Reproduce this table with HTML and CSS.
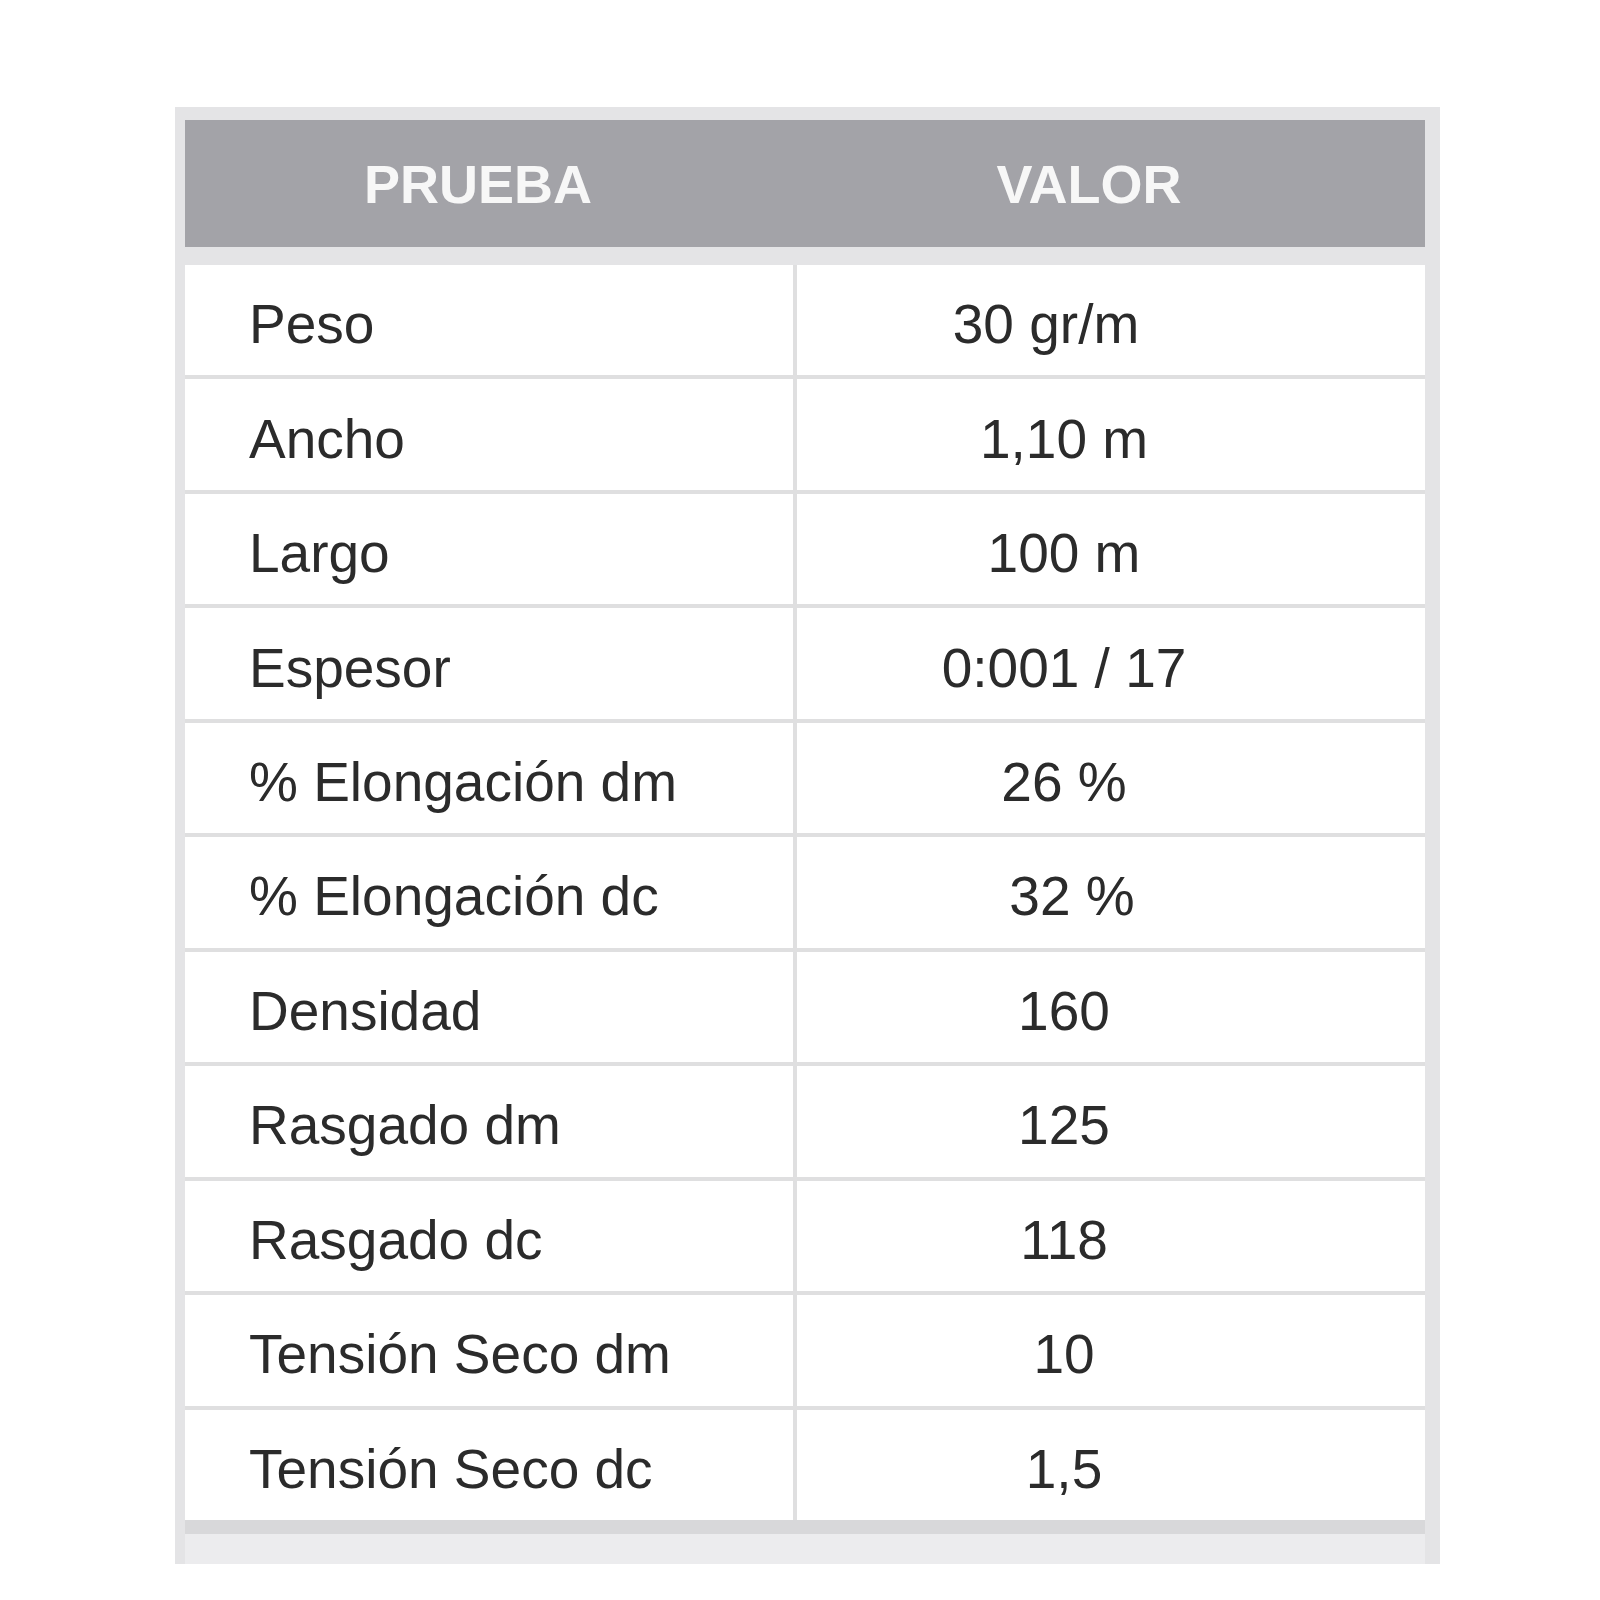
FILE: index.html
```html
<!DOCTYPE html>
<html lang="es">
<head>
<meta charset="utf-8">
<title>Especificaciones</title>
<link rel="stylesheet" href="styles.css">
</head>
<body>
<div class="page">
  <div class="frame">
    <div class="head">
      <div class="hcell hleft">PRUEBA</div>
      <div class="hcell hright">VALOR</div>
    </div>
    <div class="grid">
      <div class="cell name">Peso</div><div class="cell val val-l">30 gr/m</div>
      <div class="cell name">Ancho</div><div class="cell val">1,10 m</div>
      <div class="cell name">Largo</div><div class="cell val">100 m</div>
      <div class="cell name">Espesor</div><div class="cell val">0:001 / 17</div>
      <div class="cell name">% Elongación dm</div><div class="cell val">26 %</div>
      <div class="cell name">% Elongación dc</div><div class="cell val val-r">32 %</div>
      <div class="cell name">Densidad</div><div class="cell val">160</div>
      <div class="cell name">Rasgado dm</div><div class="cell val">125</div>
      <div class="cell name">Rasgado dc</div><div class="cell val">118</div>
      <div class="cell name">Tensión Seco dm</div><div class="cell val">10</div>
      <div class="cell name">Tensión Seco dc</div><div class="cell val">1,5</div>
    </div>
    <div class="foot"></div>
  </div>
</div>
</body>
</html>
```
FILE: styles.css
```css
html, body {
  margin: 0;
  padding: 0;
  background: #ffffff;
}
.page {
  padding: 107px 0 0 175px;
  font-family: "Liberation Sans", Arial, sans-serif;
}
.frame {
  width: 1265px;
  box-sizing: border-box;
  background: #e4e4e6;
  padding: 13px 15px 0 10px;
}
.head {
  height: 127px;
  background: #a3a3a8;
  display: grid;
  grid-template-columns: 608px 628px;
  column-gap: 4px;
  margin-bottom: 18px;
}
.hcell {
  display: flex;
  align-items: center;
  justify-content: center;
  color: #f7f7f7;
  font-weight: bold;
  font-size: 54px;
}
.hleft { padding-right: 22px; }
.hright { padding-right: 44px; }
.grid {
  height: 1255px;
  display: grid;
  grid-template-columns: 608px 628px;
  grid-auto-rows: 1fr;
  gap: 4px;
  background: #dfdfe0;
}
.cell {
  background: #ffffff;
  display: flex;
  align-items: center;
  font-size: 55px;
  color: #2b2b2b;
  padding-top: 8px;
  box-sizing: border-box;
}
.name {
  padding-left: 64px;
}
.val {
  justify-content: center;
  padding-right: 94px;
}
.val-l { padding-right: 130px; }
.val-r { padding-right: 78px; }
.foot {
  height: 30px;
  border-top: 14px solid #d8d8da;
  background: #ececee;
}
```
